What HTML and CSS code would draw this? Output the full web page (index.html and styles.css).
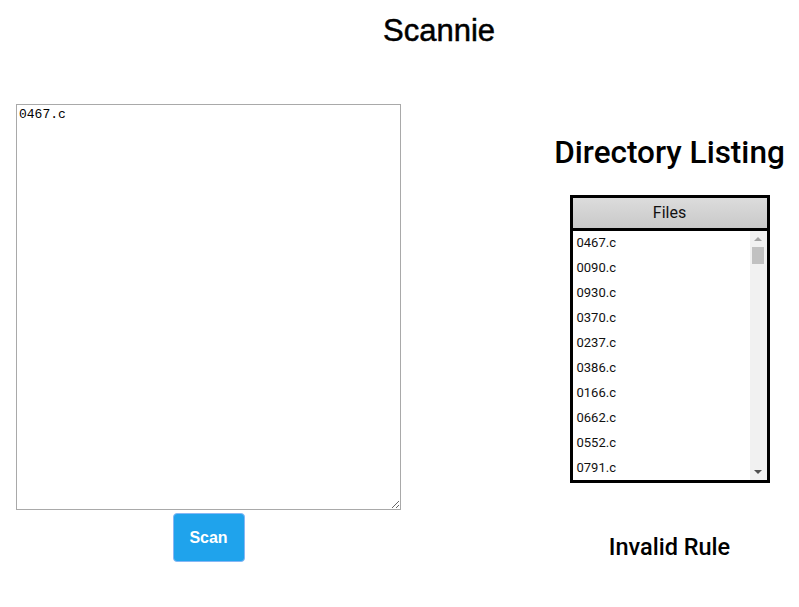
FILE: index.html
```html
<!DOCTYPE html>
<html>
<head>
<meta charset="utf-8">
<link rel="stylesheet" href="styles.css">
</head>
<body>
<header class="top">
  <h1 class="title">Scannie</h1>
</header>
<main class="main">
  <section class="left">
    <textarea class="editor">0467.c</textarea>
    <div class="actions"><button class="scan">Scan</button></div>
  </section>
  <section class="right">
    <h2 class="dir-title">Directory Listing</h2>
    <div class="files">
      <div class="files-head">Files</div>
      <div class="files-body">
        <ul class="file-list">
          <li>0467.c</li>
          <li>0090.c</li>
          <li>0930.c</li>
          <li>0370.c</li>
          <li>0237.c</li>
          <li>0386.c</li>
          <li>0166.c</li>
          <li>0662.c</li>
          <li>0552.c</li>
          <li>0791.c</li>
        </ul>
        <div class="sb">
          <div class="sb-up"></div>
          <div class="sb-thumb"></div>
          <div class="sb-space"></div>
          <div class="sb-down"></div>
        </div>
      </div>
    </div>
    <h3 class="status">Invalid Rule</h3>
  </section>
</main>
</body>
</html>
```

FILE: styles.css
```css
html, body {
  margin: 0;
  padding: 0;
  background: #fff;
}
body {
  font-family: Roboto, "Liberation Sans", sans-serif;
  color: #000;
  width: 799px;
  height: 607px;
  overflow: hidden;
}
.top {
  padding-left: 79px;
  text-align: center;
  height: 86px;
}
.title {
  margin: 0;
  padding-top: 13px;
  font-family: "Liberation Sans", Arial, sans-serif;
  font-size: 31px;
  font-weight: normal;
  line-height: 36px;
  -webkit-text-stroke: 0.5px #000;
}
.main {
  display: flex;
  padding-top: 18px;
}
.left {
  width: 385px;
  padding-left: 16px;
  display: flex;
  flex-direction: column;
}
.editor {
  box-sizing: border-box;
  width: 385px;
  height: 406px;
  margin: 0;
  padding: 2px;
  border: 1px solid #a9a9a9;
  font-family: "Liberation Mono", monospace;
  font-size: 13px;
  line-height: 15px;
  color: #000;
  resize: both;
  outline: none;
}
.actions {
  display: flex;
  justify-content: center;
  padding-top: 3px;
}
.scan {
  box-sizing: border-box;
  width: 72px;
  height: 49px;
  background: #1fa3ec;
  border: 1px solid #86b7f5;
  border-radius: 4px;
  color: #fff;
  font-family: "Liberation Sans", Arial, sans-serif;
  font-weight: bold;
  font-size: 16px;
  padding: 0;
}
.right {
  margin-left: auto;
  width: 259px;
  display: flex;
  flex-direction: column;
  align-items: center;
}
.dir-title {
  margin: 29px 0 0 0;
  font-size: 31.5px;
  font-weight: 500;
  line-height: 40px;
  white-space: nowrap;
}
.files {
  margin-top: 22px;
  width: 200px;
  box-sizing: border-box;
  border: 3px solid #000;
}
.files-head {
  height: 30px;
  line-height: 30px;
  text-align: center;
  font-size: 16px;
  color: #111;
  background: linear-gradient(#dcdcdc, #c9c9c9);
  border-bottom: 3px solid #000;
}
.files-body {
  display: flex;
  height: 249px;
  overflow: hidden;
}
.file-list {
  list-style: none;
  margin: 0;
  padding: 0 0 0 4px;
  flex: 1;
}
.file-list li {
  height: 25px;
  line-height: 23px;
  font-size: 13px;
  color: #111;
}
.sb {
  width: 17px;
  background: #f1f1f1;
  display: flex;
  flex-direction: column;
  align-items: center;
}
.sb-up {
  margin-top: 6px;
  width: 0;
  height: 0;
  border-left: 4px solid transparent;
  border-right: 4px solid transparent;
  border-bottom: 4px solid #a3a3a3;
}
.sb-thumb {
  margin-top: 6px;
  width: 12px;
  height: 17px;
  background: #c1c1c1;
}
.sb-space {
  flex: 1;
}
.sb-down {
  margin-bottom: 6px;
  width: 0;
  height: 0;
  border-left: 4px solid transparent;
  border-right: 4px solid transparent;
  border-top: 4px solid #505050;
}
.status {
  margin: 49px 0 0 0;
  font-size: 23.5px;
  font-weight: 500;
  line-height: 30px;
}
```
